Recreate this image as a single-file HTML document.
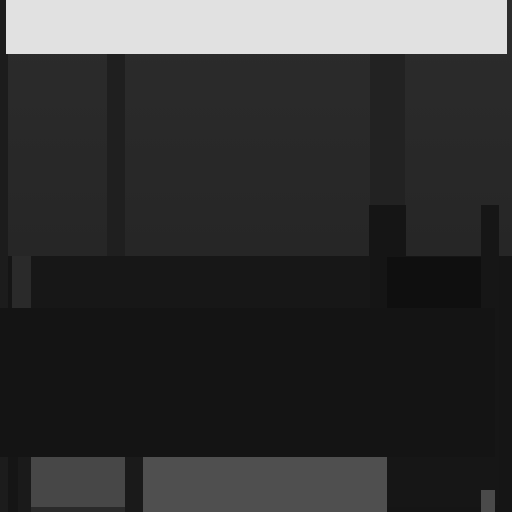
<!DOCTYPE html><html><head><style>
body{margin:0;width:512px;height:512px;background:#151515;position:relative;overflow:hidden}
div{position:absolute}
</style></head><body>
<div style="left:0;top:0;width:512px;height:256px;background:linear-gradient(#2c2c2c,#262626)"></div>
<div style="left:0;top:0;width:8px;height:512px;background:#1c1c1c"></div>
<div style="left:6px;top:0;width:501px;height:54px;background:#e1e1e1"></div>
<div style="left:107px;top:54px;width:18px;height:202px;background:#1f1f1f"></div>
<div style="left:370px;top:54px;width:35px;height:151px;background:#222"></div>
<div style="left:369px;top:205px;width:37px;height:103px;background:#151515"></div>
<div style="left:481px;top:205px;width:18px;height:300px;background:#161616"></div>
<div style="left:12px;top:256px;width:19px;height:52px;background:#2a2a2a"></div>
<div style="left:31px;top:256px;width:339px;height:52px;background:#171717"></div>
<div style="left:387px;top:257px;width:94px;height:51px;background:#0f0f0f"></div>
<div style="left:0;top:308px;width:495px;height:149px;background:#141414"></div>
<div style="left:31px;top:457px;width:94px;height:50px;background:#474747"></div>
<div style="left:125px;top:457px;width:18px;height:55px;background:#1a1a1a"></div>
<div style="left:143px;top:457px;width:244px;height:55px;background:#4f4f4f"></div>
<div style="left:387px;top:457px;width:94px;height:50px;background:#161616"></div>
<div style="left:481px;top:490px;width:14px;height:22px;background:#4a4a4a"></div>
<div style="left:18px;top:457px;width:13px;height:55px;background:#1a1a1a"></div>
<div style="left:31px;top:507px;width:94px;height:5px;background:#2a2a2a"></div>
</body></html>
